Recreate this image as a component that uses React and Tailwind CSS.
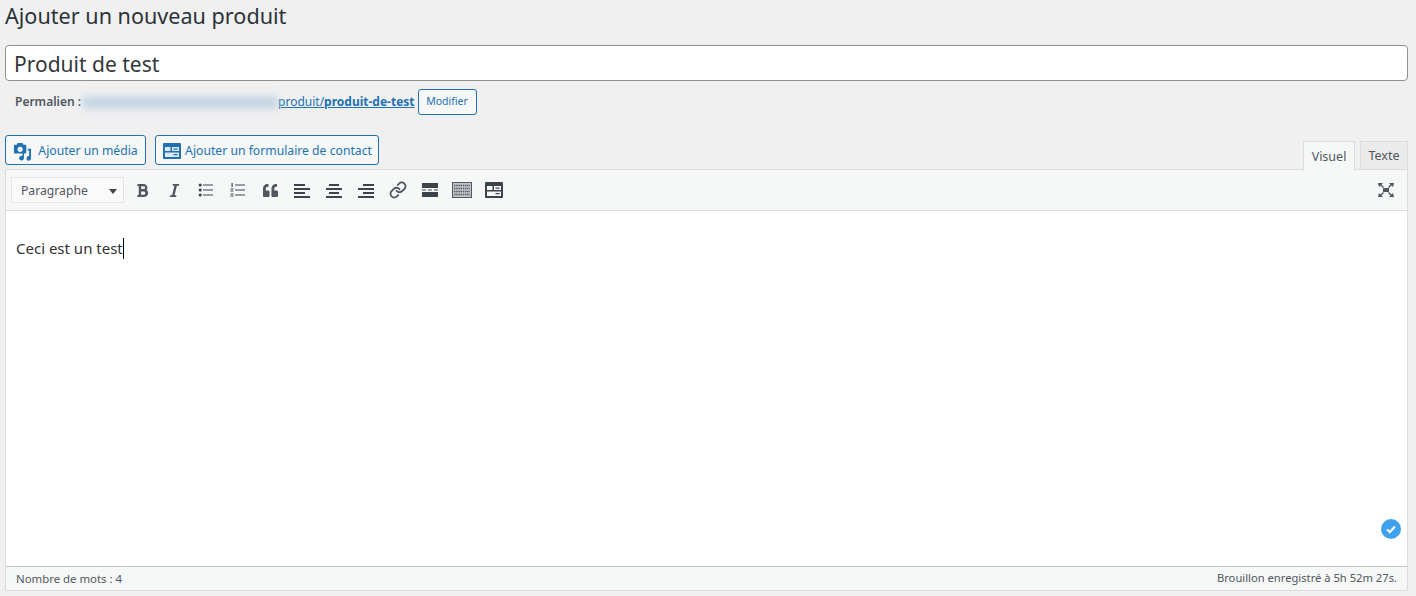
import React from 'react';
import { FaBold, FaItalic, FaQuoteLeft } from 'react-icons/fa';
import { Link } from 'lucide-react';

const Lines = ({ rows }) => (
  <svg width="20" height="20" viewBox="0 0 20 20" fill="#3c434a">
    {rows.map((r, i) => (
      <rect key={i} x={r[0]} y={r[1]} width={r[2]} height={r[3] || 2} />
    ))}
  </svg>
);

const BulletList = () => (
  <svg width="20" height="20" viewBox="0 0 20 20" fill="#3c434a">
    <circle cx="4.2" cy="5" r="1.6" />
    <circle cx="4.2" cy="10" r="1.6" />
    <circle cx="4.2" cy="15" r="1.6" />
    <rect x="7" y="4.5" width="10" height="1" />
    <rect x="7" y="9.5" width="10" height="1" />
    <rect x="7" y="14.5" width="10" height="1" />
  </svg>
);

const NumberList = () => (
  <svg width="20" height="20" viewBox="0 0 20 20" fill="#3c434a">
    <rect x="3.5" y="3" width="1.2" height="4" />
    <rect x="2.5" y="8.5" width="3" height="1" />
    <rect x="2.5" y="10.5" width="3" height="1" />
    <rect x="2.5" y="13.5" width="3" height="1" />
    <rect x="2.5" y="15.5" width="3" height="1" />
    <rect x="7" y="4.5" width="10" height="1" />
    <rect x="7" y="9.5" width="10" height="1" />
    <rect x="7" y="14.5" width="10" height="1" />
  </svg>
);

const MoreTag = () => (
  <svg width="20" height="20" viewBox="0 0 20 20" fill="#3c434a">
    <rect x="2" y="3" width="16" height="5" />
    <rect x="2" y="9.5" width="4" height="1" />
    <rect x="8" y="9.5" width="4" height="1" />
    <rect x="14" y="9.5" width="4" height="1" />
    <rect x="2" y="12" width="16" height="5" />
  </svg>
);

const Kitchen = () => (
  <svg width="20" height="20" viewBox="0 0 20 20">
    <rect x="0.5" y="2.5" width="19" height="15" fill="#c3c4c7" stroke="#50575e" />
    <path d="M2 5.5h16M2 8.5h16M2 11.5h16M2 14.5h16" stroke="#50575e" strokeWidth="1.4" strokeDasharray="1.4 0.8" />
  </svg>
);

const FormIcon = ({ color, inner }) => (
  <svg width="20" height="20" viewBox="0 0 20 20">
    <rect x="1" y="2" width="18" height="16" rx="1" fill={color} />
    <rect x="3" y="6" width="14" height="10" fill={inner} />
    <rect x="3" y="10" width="14" height="1.5" fill={color} />
    <rect x="8.5" y="6" width="1.5" height="4" fill={color} />
    <rect x="11.5" y="7.5" width="4" height="1.2" fill={color} />
    <rect x="11.5" y="13" width="4" height="1.2" fill={color} />
  </svg>
);

const MediaIcon = () => (
  <svg width="19" height="19" viewBox="0 0 20 20" fill="#2271b1">
    <path d="M2 3h2l1-2h5l1 2h2a1 1 0 0 1 1 1v7a1 1 0 0 1-1 1H2a1 1 0 0 1-1-1V4a1 1 0 0 1 1-1zm5.500 2a2.700 2.700 0 1 0 0 5.400 2.700 2.700 0 0 0 0-5.400z" />
    <path d="M19 7v10.200a2.400 2.400 0 1 1-2-2.300V9h-1.500V7H19z" />
    <circle cx="9" cy="17" r="2.400" />
    <path d="M10 10h1.600v7H10z" />
  </svg>
);

const Fullscreen = () => (
  <svg width="20" height="20" viewBox="0 0 20 20" fill="#50575e">
    <rect x="7" y="8" width="6" height="4" />
    <path d="M2 3h5L5.500 4.500 8 7 7 8 4.500 5.500 3 7zM18 3h-5l1.500 1.500L12 7l1 1 2.500-2.500L17 7zM2 17h5l-1.500-1.500L8 13l-1-1-2.500 2.500L3 13zM18 17h-5l1.500-1.500L12 13l1-1 2.500 2.500L17 13z" />
  </svg>
);

const ToolButton = ({ children }) => (
  <div className="w-[32px] h-[28px] flex items-center justify-center text-[#50575e]">{children}</div>
);

const App = () => {
  return (
    <div className="w-[1416px] h-[596px] overflow-hidden bg-[#f0f0f1] px-[5px] text-[#3c434a] font-['Noto_Sans','Open_Sans',sans-serif]">
      <h1 className="text-[21.6px] leading-[32px] text-[#2c3338] font-normal whitespace-nowrap">Ajouter un nouveau produit</h1>

      <input
        readOnly
        value="Produit de test"
        className="mt-[13px] block w-[1403px] h-[36px] pt-[1px] bg-white border border-[#8c8f94] rounded-[4px] px-[8px] text-[21px] text-[#32373c] outline-none"
      />

      <div className="mt-[8px] h-[26px] pl-[10px] flex items-center text-[12px] whitespace-nowrap">
        <span className="font-semibold text-[#50575e]">Permalien :</span>
        <span className="ml-[2px] w-[195px] h-[11px] bg-[#bdd0e2] blur-[4px]"></span>
        <span className="text-[#2271b1] underline">
          produit/<span className="font-bold">produit-de-test</span>
        </span>
        <button className="ml-[3px] w-[59px] h-[26px] bg-[#f6f7f7] border border-[#2271b1] rounded-[3px] text-[10.5px] text-[#2271b1]">Modifier</button>
      </div>

      <div className="mt-[20px] w-[1403px] h-[34px] flex items-start">
        <button className="h-[30px] w-[141px] pt-[2px] flex items-center justify-center gap-[6px] bg-[#f6f7f7] border border-[#2271b1] rounded-[3px] text-[12.2px] text-[#2271b1] whitespace-nowrap">
          <MediaIcon />
          Ajouter un média
        </button>
        <button className="ml-[9px] h-[30px] w-[224px] pt-[2px] flex items-center justify-center gap-[3px] bg-[#f6f7f7] border border-[#2271b1] rounded-[3px] text-[12.2px] text-[#2271b1] whitespace-nowrap">
          <FormIcon color="#2271b1" inner="#dbe7f1" />
          Ajouter un formulaire de contact
        </button>
        <div className="ml-auto mt-[6px] flex items-start text-[12.5px]">
          <div className="w-[52px] h-[30px] pt-[2px] flex items-center justify-center bg-[#f6f7f7] border border-[#dcdcde] border-b-0 text-[#50575e] relative z-10">Visuel</div>
          <div className="ml-[5px] w-[48px] h-[29px] pt-[2px] flex items-center justify-center bg-[#ebebec] border border-[#dcdcde] text-[#50575e]">Texte</div>
        </div>
      </div>

      <div className="w-[1403px] border border-[#dcdcde] bg-white">
        <div className="h-[41px] bg-[#f6f7f7] border-b border-[#dcdcde] flex items-center pl-[5px] pr-[11px]">
          <div className="w-[113px] h-[26px] pt-[2px] bg-[#fafafa] border border-[#e4e4e6] flex items-center justify-between pl-[9px] pr-[6px] text-[12.2px] text-[#50575e]">
            Paragraphe
            <span className="w-0 h-0 border-x-[4px] border-x-transparent border-t-[5px] border-t-[#3c434a]"></span>
          </div>
          <div className="ml-[2px] flex items-center">
            <ToolButton><FaBold size={15} /></ToolButton>
            <ToolButton><FaItalic size={15} /></ToolButton>
            <ToolButton><BulletList /></ToolButton>
            <ToolButton><NumberList /></ToolButton>
            <ToolButton><FaQuoteLeft size={15} /></ToolButton>
            <ToolButton><Lines rows={[[2, 4, 11], [2, 8, 16], [2, 12, 11], [2, 16, 16]]} /></ToolButton>
            <ToolButton><Lines rows={[[5, 4, 10], [2, 8, 16], [5, 12, 10], [2, 16, 16]]} /></ToolButton>
            <ToolButton><Lines rows={[[7, 4, 11], [2, 8, 16], [7, 12, 11], [2, 16, 16]]} /></ToolButton>
            <ToolButton><Link size={18} strokeWidth={2.5} /></ToolButton>
            <ToolButton><MoreTag /></ToolButton>
            <ToolButton><Kitchen /></ToolButton>
            <ToolButton><FormIcon color="#3c434a" inner="#f6f7f7" /></ToolButton>
          </div>
          <div className="ml-auto"><Fullscreen /></div>
        </div>

        <div className="relative h-[355px] px-[10px] pt-[27px] text-[15px] leading-[21px] text-[#333]">
          Ceci est un test<span className="inline-block w-px h-[21px] bg-black align-top"></span>
          <div className="absolute right-[6px] bottom-[27px] w-[20px] h-[20px] rounded-full bg-[#3fa0ee] flex items-center justify-center">
            <svg width="12" height="12" viewBox="0 0 12 12" fill="none" stroke="#fff" strokeWidth="2.2">
              <path d="M2 6.500l2.800 2.500L10 3.500" />
            </svg>
          </div>
        </div>

        <div className="h-[24px] bg-[#f6f7f7] border-t border-[#c3c4c7] flex items-center justify-between px-[10px] text-[11.2px] text-[#50575e]">
          <span className="text-[11.4px]">Nombre de mots : 4</span>
          <span>Brouillon enregistré à 5h 52m 27s.</span>
        </div>
      </div>
    </div>
  );
};

export default App;
